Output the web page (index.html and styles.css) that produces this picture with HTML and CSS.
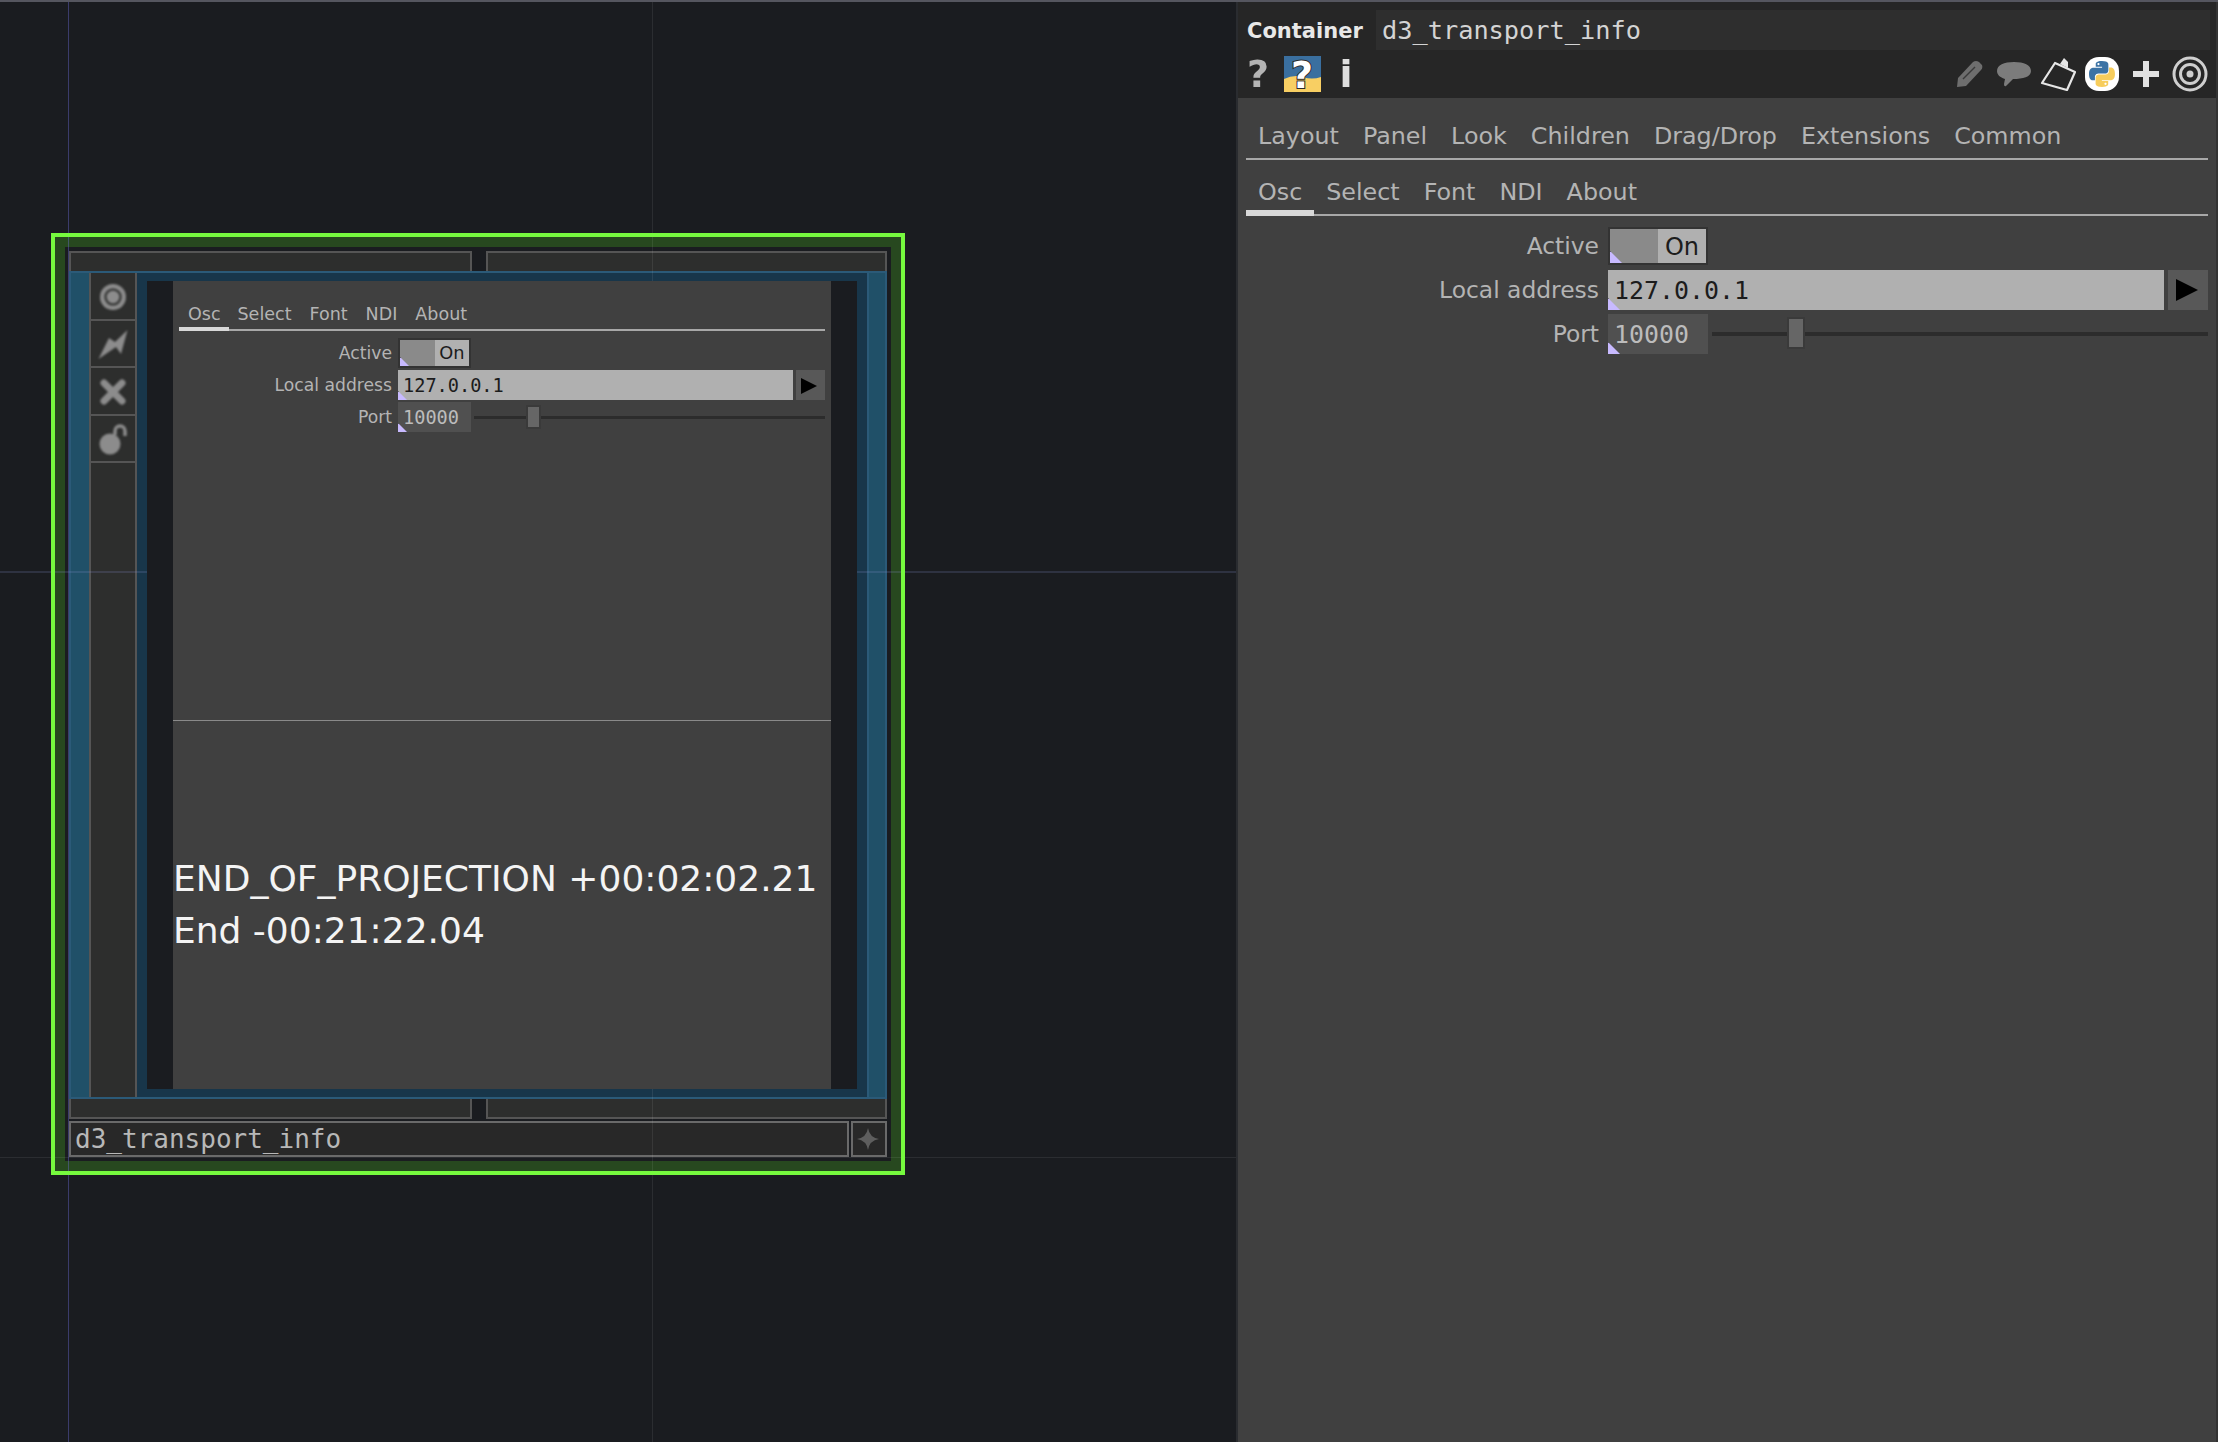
FILE: index.html
```html
<!DOCTYPE html>
<html lang="en">
  <head>
    <meta charset="UTF-8" />
    <title>d3_transport_info</title>
    <link rel="stylesheet" href="styles.css">
  </head>
  <body>
    <div class="canvas">
      <div class="grid-line h-line line-a"></div>
      <div class="grid-line h-line line-b"></div>
      <div class="node">
        <div class="node-tabs"><div class="node-tab"></div><div class="node-tab"></div></div>
        <div class="node-body">
          <div class="blue-strip"></div>
          <div class="node-tools">
            <div class="tool">
              <svg width="30" height="30" viewBox="0 0 30 30"><circle cx="15" cy="15" r="13" fill="#8c8c8c"/><circle cx="15" cy="15" r="7.500" fill="none" stroke="#3a3b3a" stroke-width="2.500"/></svg>
            </div>
            <div class="tool">
              <svg width="32" height="34" viewBox="0 0 32 34"><path d="M1.500 31 L12 10 L18 14 L30.500 2 L24 26 L19 19 Z" fill="#8c8c8c"/></svg>
            </div>
            <div class="tool">
              <svg width="30" height="30" viewBox="0 0 30 30"><path d="M6 6 L24 24 M24 6 L6 24" stroke="#8c8c8c" stroke-width="7" stroke-linecap="round"/></svg>
            </div>
            <div class="tool">
              <svg width="30" height="32" viewBox="0 0 30 32"><circle cx="12" cy="20" r="10.500" fill="#8c8c8c"/><path d="M17 11 V7 A5 5 0 0 1 27 7 V12" fill="none" stroke="#8c8c8c" stroke-width="3.500"/></svg>
            </div>
            <div class="tool tool-fill"></div>
          </div>
          <div class="node-inner">
            <div class="inner-gap"></div>
            <div class="viewer">
              <div class="params small">
                <div class="tabs tabs-sub">
                  <span class="tab active">Osc</span><span class="tab">Select</span><span class="tab">Font</span><span class="tab">NDI</span><span class="tab">About</span>
                </div>
                <div class="row">
                  <label>Active</label>
                  <div class="toggle"><span class="toggle-off"></span><span class="toggle-on">On</span><i class="corner"></i></div>
                </div>
                <div class="row">
                  <label>Local address</label>
                  <div class="field light">127.0.0.1<i class="corner"></i></div>
                  <div class="go"><svg viewBox="0 0 16 16"><path d="M0 0 L16 8 L0 16 Z" fill="#000"/></svg></div>
                </div>
                <div class="row">
                  <label>Port</label>
                  <div class="field num">10000<i class="corner"></i></div>
                  <div class="slider"><b></b></div>
                </div>
              </div>
              <div class="divider"></div>
              <div class="readout">
                <p>END_OF_PROJECTION +00:02:02.21</p>
                <p>End -00:21:22.04</p>
              </div>
            </div>
            <div class="inner-gap"></div>
          </div>
          <div class="blue-strip"></div>
        </div>
        <div class="node-tabs bottom"><div class="node-tab"></div><div class="node-tab"></div></div>
        <div class="node-foot">
          <div class="node-name">d3_transport_info</div>
          <div class="node-star">
            <svg width="24" height="24" viewBox="0 0 24 24"><path d="M12 1 Q13.500 10.500 23 12 Q13.500 13.500 12 23 Q10.500 13.500 1 12 Q10.500 10.500 12 1 Z" fill="#5e5e5e"/></svg>
          </div>
        </div>
      </div>
      <div class="grid-line v-line line-c"></div>
      <div class="grid-line v-line line-d"></div>
    </div>

    <div class="panel">
      <div class="panel-head">
        <div class="name-row">
          <span class="op-type">Container</span>
          <div class="op-name">d3_transport_info</div>
        </div>
        <div class="icon-row">
          <span class="slot glyph q">?</span>
          <span class="slot">
            <svg class="help-box" width="37" height="36" viewBox="0 0 37 36">
              <rect width="37" height="36" fill="#3a6f9f"/>
              <path d="M0 23 Q10 18 19 21 T37 21 V36 H0 Z" fill="#f8cf63"/>
              <text x="18" y="32" text-anchor="middle" class="help-q">?</text>
            </svg>
          </span>
          <span class="slot glyph i">i</span>
          <span class="icon-space"></span>
          <span class="slot soft">
            <svg width="30" height="30" viewBox="0 0 30 30"><path d="M2 28 L3 19 L18 3 Q21 1 24 3 L27 6 Q28 9 26 11 L11 27 Z" fill="#6e6e6e"/><path d="M8 20 L20 8" stroke="#3a3a3a" stroke-width="1.500"/></svg>
          </span>
          <span class="slot soft">
            <svg width="36" height="30" viewBox="0 0 36 30"><path d="M18 3 C28 3 35 6 35 12 C35 18 27 20 17 20 L10 27 Q8 28 8 25 L9 20 C3 18 1 15 1 12 C1 6 8 3 18 3 Z" fill="#7c7c7c"/></svg>
          </span>
          <span class="slot soft">
            <svg width="36" height="34" viewBox="0 0 36 34"><path d="M15 6 L35 15 L27 33 L2 26 Z" fill="none" stroke="#e6e6e6" stroke-width="2.200" stroke-linejoin="round"/><path d="M20 7 L24 1 L28 5 L28 11 Z" fill="#e6e6e6"/></svg>
          </span>
          <span class="slot">
            <svg width="34" height="34" viewBox="0 0 34 34">
              <rect width="34" height="34" rx="14" fill="#fff"/>
              <g transform="translate(4 4) scale(0.236)">
                <path fill="#3c73a5" fill-rule="evenodd" d="M54.900 0C26.800 0 28.600 12.200 28.600 12.200l.03 12.600h26.800v3.800H18S0 26.500 0 54.800c0 28.200 15.700 27.200 15.700 27.200h9.400V68.900s-.5-15.700 15.400-15.700h26.600s14.900.2 14.900-14.400V14.700S84.400 0 54.900 0zM40.100 8.400c2.700 0 4.800 2.200 4.800 4.800s-2.200 4.800-4.800 4.800-4.800-2.200-4.800-4.800 2.200-4.800 4.800-4.800z"/>
                <path fill="#f7cd5c" fill-rule="evenodd" transform="rotate(180 55 55)" d="M54.900 0C26.800 0 28.600 12.200 28.600 12.200l.03 12.600h26.800v3.800H18S0 26.500 0 54.800c0 28.200 15.700 27.200 15.700 27.200h9.400V68.900s-.5-15.700 15.400-15.700h26.600s14.900.2 14.900-14.400V14.700S84.400 0 54.900 0zM40.100 8.400c2.700 0 4.800 2.200 4.800 4.800s-2.200 4.800-4.800 4.800-4.800-2.200-4.800-4.800 2.200-4.800 4.800-4.800z"/>
              </g>
            </svg>
          </span>
          <span class="slot soft">
            <svg width="30" height="30" viewBox="0 0 30 30"><path d="M15 2 V28 M2 15 H28" stroke="#e2e2e2" stroke-width="6"/></svg>
          </span>
          <span class="slot soft">
            <svg width="36" height="36" viewBox="0 0 36 36"><circle cx="18" cy="18" r="16" fill="none" stroke="#cfcfcf" stroke-width="3"/><circle cx="18" cy="18" r="9.500" fill="none" stroke="#cfcfcf" stroke-width="3"/><circle cx="18" cy="18" r="3.500" fill="#cfcfcf"/></svg>
          </span>
        </div>
      </div>
      <div class="params">
        <div class="tabs">
          <span class="tab">Layout</span><span class="tab">Panel</span><span class="tab">Look</span><span class="tab">Children</span><span class="tab">Drag/Drop</span><span class="tab">Extensions</span><span class="tab">Common</span>
        </div>
        <div class="tabs tabs-sub">
          <span class="tab active">Osc</span><span class="tab">Select</span><span class="tab">Font</span><span class="tab">NDI</span><span class="tab">About</span>
        </div>
        <div class="row">
          <label>Active</label>
          <div class="toggle"><span class="toggle-off"></span><span class="toggle-on">On</span><i class="corner"></i></div>
        </div>
        <div class="row">
          <label>Local address</label>
          <div class="field light">127.0.0.1<i class="corner"></i></div>
          <div class="go"><svg viewBox="0 0 16 16"><path d="M0 0 L16 8 L0 16 Z" fill="#000"/></svg></div>
        </div>
        <div class="row">
          <label>Port</label>
          <div class="field num">10000<i class="corner"></i></div>
          <div class="slider"><b></b></div>
        </div>
      </div>
    </div>
  </body>
</html>
```

FILE: styles.css
```css
* {
  box-sizing: border-box;
}

body {
  margin: 0;
  width: 2218px;
  height: 1442px;
  overflow: hidden;
  display: flex;
  background-color: #1a1c20;
  border-top: 2px solid #55565f;
  font-family: "DejaVu Sans", sans-serif;
}

/* network canvas */
.canvas {
  position: relative;
  width: 1236px;
  height: 1440px;
  flex: none;
}

.grid-line {
  position: absolute;
  z-index: 2;
  pointer-events: none;
}

.h-line {
  left: 0;
  right: 0;
}

.v-line {
  top: 0;
  bottom: 0;
  width: 1px;
}

.line-a { top: 569px; height: 2px; background: rgba(130, 140, 200, 0.2); }
.line-b { top: 1155px; height: 1px; background: rgba(255, 255, 255, 0.08); }
.line-c { left: 68px; background: rgba(110, 110, 220, 0.4); }
.line-d { left: 652px; background: rgba(255, 255, 255, 0.08); }

.node {
  position: absolute;
  left: 51px;
  top: 231px;
  width: 854px;
  height: 942px;
  padding: 18px;
  display: flex;
  flex-direction: column;
  box-shadow: inset 0 0 0 14px #27481f;
}

/* bright selection frame, drawn above the grid lines */
.node::after {
  content: "";
  position: absolute;
  inset: 0;
  z-index: 3;
  border: 4px solid #76fa3e;
  pointer-events: none;
}

.node-tabs {
  display: flex;
  justify-content: space-between;
  height: 20px;
  flex: none;
}

.node-tab {
  width: 403px;
  background: #2d2e2d;
  border: 2px solid #555;
  border-bottom: none;
}

.node-tab + .node-tab {
  width: 401px;
}

.node-tabs.bottom .node-tab {
  border: 2px solid #555;
  border-top: none;
}

.node-body {
  height: 828px;
  flex: none;
  display: flex;
  background: #18364a;
  border: solid #2b5a78;
  border-width: 2px 0;
}

.blue-strip {
  width: 20px;
  flex: none;
  background: #205068;
  border-left: 2px solid #2b5a78;
}

.blue-strip:last-child {
  border-right: 2px solid #2b5a78;
}

.node-tools {
  width: 48px;
  flex: none;
  display: flex;
  flex-direction: column;
  background: #2d2e2d;
  border: solid #555;
  border-width: 0 2px;
}

.tool {
  height: 47.500px;
  flex: none;
  display: flex;
  align-items: center;
  justify-content: center;
  padding-top: 3px;
  border-bottom: 2px solid #555;
}

.tool svg {
  filter: blur(0.8px);
}

.tool-fill {
  flex: 1;
  border-bottom: none;
}

.node-inner {
  flex: 1;
  display: flex;
  padding: 8px 10px;
}

.inner-gap {
  position: relative;
  z-index: 3;
  width: 26px;
  flex: none;
  background: #1a1c20;
}

.viewer {
  position: relative;
  z-index: 3;
  flex: 1;
  background: #404040;
  display: flex;
  flex-direction: column;
}

.divider {
  height: 1px;
  margin-top: 288px;
  background: #8a8a8a;
  flex: none;
}

.readout {
  margin-top: 132px;
  color: #f4f4f4;
  font-size: 36px;
  line-height: 52px;
}

.readout p {
  margin: 0;
}

.node-foot {
  display: flex;
  justify-content: space-between;
  height: 36px;
  margin-top: 2px;
  flex: none;
}

.node-name {
  width: 780px;
  padding-left: 4px;
  background: #282828;
  border: 2px solid #6a6a6a;
  color: #b8b8b8;
  font-family: "DejaVu Sans Mono", monospace;
  font-size: 26px;
  line-height: 32px;
}

.node-star {
  width: 36px;
  display: flex;
  align-items: center;
  justify-content: center;
  padding-right: 2px;
  background: #282828;
  border: 2px solid #6a6a6a;
}

/* parameter panel */
.panel {
  width: 982px;
  height: 1440px;
  flex: none;
  display: flex;
  flex-direction: column;
  background: #404040;
  border-left: 2px solid #2a2c30;
  border-right: 2px solid #333;
}

.panel-head {
  height: 96px;
  padding: 8px 6px 0 9px;
  background: #262626;
  flex: none;
}

.name-row {
  display: flex;
  align-items: center;
  height: 40px;
}

.op-type {
  width: 129px;
  padding-top: 2px;
  color: #e8e8e8;
  font-weight: bold;
  font-size: 21px;
}

.op-name {
  flex: 1;
  height: 40px;
  padding-left: 6px;
  background: #2e2e2e;
  color: #d4d4d4;
  font-family: "DejaVu Sans Mono", monospace;
  font-size: 25.300px;
  line-height: 42px;
}

.icon-row {
  display: flex;
  align-items: center;
  height: 44px;
  margin: 2px -2px 0 -11px;
}

.slot {
  width: 44px;
  flex: none;
  display: flex;
  align-items: center;
  justify-content: center;
}

.soft svg {
  filter: blur(0.5px);
}

.glyph {
  font-weight: bold;
  font-size: 38px;
  line-height: 44px;
  color: #b4b4b4;
  filter: blur(0.5px);
}

.glyph.i {
  color: #dedede;
}

.help-box {
  overflow: visible;
}

.help-q {
  font: bold 38px "DejaVu Sans", sans-serif;
  fill: #fff;
  stroke: #2a2a2a;
  stroke-width: 2px;
  paint-order: stroke;
}

.icon-space {
  flex: 1;
}

.params {
  flex: 1;
  padding: 18px 8px 0 8px;
}

.tabs {
  display: flex;
  height: 44px;
  border-bottom: 2px solid #a8a8a8;
  color: #b4b4b4;
  font-size: 23.800px;
  line-height: 41px;
}

.tab {
  padding: 0 12px;
  height: 44px;
}

.tab.active {
  border-bottom: 6px solid #d8d8d8;
}

.tabs-sub {
  margin-top: 12px;
}

.row {
  display: flex;
  align-items: center;
  height: 40px;
  margin-top: 4px;
}

.tabs-sub + .row {
  margin-top: 10px;
}

.row label {
  width: 353px;
  flex: none;
  margin-right: 9px;
  text-align: right;
  color: #b4b4b4;
  font-size: 23.400px;
}

.toggle {
  position: relative;
  display: flex;
  width: 100px;
  height: 38px;
  border: 2px solid #333;
}

.toggle-off {
  width: 48px;
  background: #8a8a8a;
}

.toggle-on {
  flex: 1;
  background: #b0b0b0;
  color: #1c1c1c;
  text-align: center;
  font-size: 24px;
  line-height: 36px;
}

.field {
  position: relative;
  height: 40px;
  padding-left: 6px;
  font-family: "DejaVu Sans Mono", monospace;
  font-size: 24.900px;
  line-height: 42px;
}

.field.light {
  width: 558px;
  background: #b0b0b0;
  color: #1c1c1c;
}

.field.num {
  width: 100px;
  background: #505050;
  color: #bcbcbc;
}

.corner {
  position: absolute;
  left: 0;
  bottom: 0;
  width: 12px;
  height: 12px;
  background: #c8baff;
  border-top: 1px solid #222;
  clip-path: polygon(0 0, 100% 100%, 0 100%);
}

.go {
  width: 40px;
  height: 40px;
  margin-left: 4px;
  padding: 9px 9px 9px 7px;
  background: #585858;
}

.go svg {
  display: block;
  width: 24px;
  height: 22px;
}

.slider {
  position: relative;
  flex: 1;
  height: 4px;
  margin-left: 4px;
  background: #2c2c2c;
}

.slider b {
  position: absolute;
  left: 75px;
  top: -15px;
  width: 18px;
  height: 32px;
  background: #666;
  border: 2px solid #3a3a3a;
}

/* the same panel, drawn smaller inside the node viewer */
.params.small {
  flex: none;
  padding: 18px 6px 0 6px;
}

.small .tabs {
  height: 32px;
  font-size: 17.500px;
  line-height: 30px;
}

.small .tab {
  height: 32px;
  padding: 0 9px;
}

.small .tab.active {
  width: 50px;
  padding: 0 0 0 9px;
  border-bottom-width: 4px;
}

.small .tab.active + .tab {
  padding-left: 8.500px;
}

.small .tabs-sub {
  margin-top: 0;
}

.small .row {
  height: 30px;
  margin-top: 2px;
}

.small .tabs-sub + .row {
  margin-top: 7px;
}

.small .row label {
  width: 213px;
  margin-right: 6px;
  font-size: 17.200px;
}

.small .toggle {
  width: 73px;
  height: 30px;
}

.small .toggle-off {
  width: 35px;
}

.small .toggle-on {
  font-size: 17.800px;
  line-height: 26px;
}

.small .field {
  height: 30px;
  padding-left: 5px;
  font-size: 18.600px;
  line-height: 31px;
}

.small .field.light {
  width: 395px;
}

.small .field.num {
  width: 73px;
}

.small .corner {
  width: 9px;
  height: 9px;
}

.small .go {
  width: 29px;
  height: 30px;
  margin-left: 3px;
  padding: 8px 7px 6px 5px;
}

.small .go svg {
  width: 16px;
  height: 16px;
}

.small .slider {
  height: 3px;
  margin-left: 3px;
}

.small .slider b {
  left: 52px;
  top: -11px;
  width: 15px;
  height: 24px;
}
```
